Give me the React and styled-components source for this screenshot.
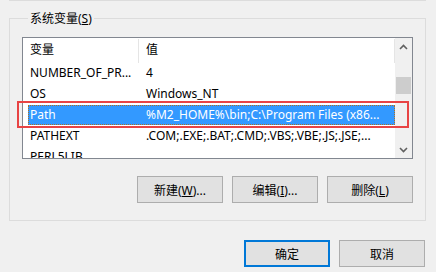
import React from "react";
import styled, { createGlobalStyle } from "styled-components";

const rows = [
  { name: "NUMBER_OF_PR...", value: "4" },
  { name: "OS", value: "Windows_NT" },
  { name: "Path", value: "%M2_HOME%\\bin;C:\\Program Files (x86...", selected: true },
  { name: "PATHEXT", value: ".COM;.EXE;.BAT;.CMD;.VBS;.VBE;.JS;.JSE;..." },
  { name: "PERL5LIB", value: "" },
];

export default function App() {
  return (
    <Page>
      <GlobalStyle />
      <TopRule />
      <GroupBox>
        <Legend>
          系统变量(<u>S</u>)
        </Legend>
        <ListBox>
          <ListBody>
            <HeaderRow>
              <NameCell>变量</NameCell>
              <ValueCell>值</ValueCell>
            </HeaderRow>
            {rows.map((r) => (
              <Row key={r.name} $selected={r.selected}>
                <NameCell>{r.name}</NameCell>
                <ValueCell>{r.value}</ValueCell>
              </Row>
            ))}
          </ListBody>
          <ScrollBar>
            <Arrow>
              <svg width="9" height="6" viewBox="0 0 9 6">
                <path d="M1 5 L4.5 1.5 L8 5" fill="none" stroke="#606060" strokeWidth="1.6" />
              </svg>
            </Arrow>
            <Track>
              <Thumb />
            </Track>
            <Arrow>
              <svg width="9" height="6" viewBox="0 0 9 6">
                <path d="M1 1 L4.5 4.5 L8 1" fill="none" stroke="#606060" strokeWidth="1.6" />
              </svg>
            </Arrow>
          </ScrollBar>
          <Highlight />
        </ListBox>
        <ButtonRow>
          <Button>
            新建(<u>W</u>)...
          </Button>
          <Button>
            编辑(<u>I</u>)...
          </Button>
          <Button>
            删除(<u>L</u>)
          </Button>
        </ButtonRow>
      </GroupBox>
      <Footer>
        <Button $default>确定</Button>
        <Button>取消</Button>
      </Footer>
    </Page>
  );
}

const GlobalStyle = createGlobalStyle`
  body {
    margin: 0;
    background: #f0f0f0;
    font-family: "Noto Sans", "Noto Sans CJK SC", sans-serif;
    font-size: 12px;
    color: #000;
  }
`;

const Page = styled.div`
  width: 436px;
  height: 272px;
  overflow: hidden;
`;

const TopRule = styled.div`
  margin-left: 9px;
  width: 417px;
  height: 1px;
  background: #dcdcdc;
`;

const GroupBox = styled.fieldset`
  margin: 9px 0 0 9px;
  width: 417px;
  height: 211px;
  box-sizing: border-box;
  border: 1px solid #dcdcdc;
  padding: 10px 12px 0 12px;
  display: flex;
  flex-direction: column;
`;

const Legend = styled.legend`
  margin-left: 6px;
  padding: 0 2px;
  font-size: 12px;
  line-height: 17px;
  u {
    text-decoration-thickness: 1px;
  }
`;

const ListBox = styled.div`
  position: relative;
  display: flex;
  width: 391px;
  height: 122px;
  box-sizing: border-box;
  border: 1px solid #828790;
  background: #fff;
`;

const ListBody = styled.div`
  flex: 1;
  overflow: hidden;
`;

const HeaderRow = styled.div`
  display: grid;
  grid-template-columns: 116px 256px;
  height: 25px;
  align-items: center;
  & > div {
    border-right: 1px solid #e5e5e5;
    height: 24px;
    line-height: 22px;
  }
`;

const Row = styled.div`
  display: grid;
  grid-template-columns: 116px 256px;
  height: 21px;
  line-height: 20px;
  position: relative;
  color: ${(p) => (p.$selected ? "#fff" : "#000")};
  &::before {
    content: "";
    display: ${(p) => (p.$selected ? "block" : "none")};
    position: absolute;
    left: 5px;
    right: 0;
    top: 0;
    bottom: 1px;
    background: #3399ff;
    outline: 1px dotted #b07020;
    outline-offset: -1px;
  }
`;

const NameCell = styled.div`
  position: relative;
  padding-left: 7px;
  white-space: nowrap;
  overflow: hidden;
  text-overflow: ellipsis;
`;

const ValueCell = styled.div`
  position: relative;
  padding-left: 7px;
  white-space: nowrap;
  overflow: hidden;
`;

const Highlight = styled.div`
  position: absolute;
  left: -6px;
  top: 63px;
  width: 392px;
  height: 27px;
  border: 2px solid #e84444;
  box-sizing: border-box;
  pointer-events: none;
`;

const ScrollBar = styled.div`
  width: 17px;
  display: flex;
  flex-direction: column;
  background: #f0f0f0;
`;

const Arrow = styled.div`
  height: 17px;
  display: flex;
  align-items: center;
  justify-content: center;
`;

const Track = styled.div`
  flex: 1;
  padding-top: 22px;
`;

const Thumb = styled.div`
  height: 17px;
  margin: 0 1px;
  background: #cdcdcd;
`;

const ButtonRow = styled.div`
  display: flex;
  justify-content: flex-end;
  gap: 9px;
  margin-top: 17px;
  width: 391px;
`;

const Button = styled.button`
  width: 86px;
  height: 27px;
  box-sizing: border-box;
  background: #e1e1e1;
  border: ${(p) => (p.$default ? "2px solid #0078d7" : "1px solid #adadad")};
  font-family: "Noto Sans", "Noto Sans CJK SC", sans-serif;
  font-size: 12px;
  color: #000;
  padding: 0;
  u {
    text-decoration-thickness: 1px;
  }
`;

const Footer = styled.div`
  display: flex;
  justify-content: flex-end;
  gap: 9px;
  width: 425px;
  margin-top: 19px;
`;
